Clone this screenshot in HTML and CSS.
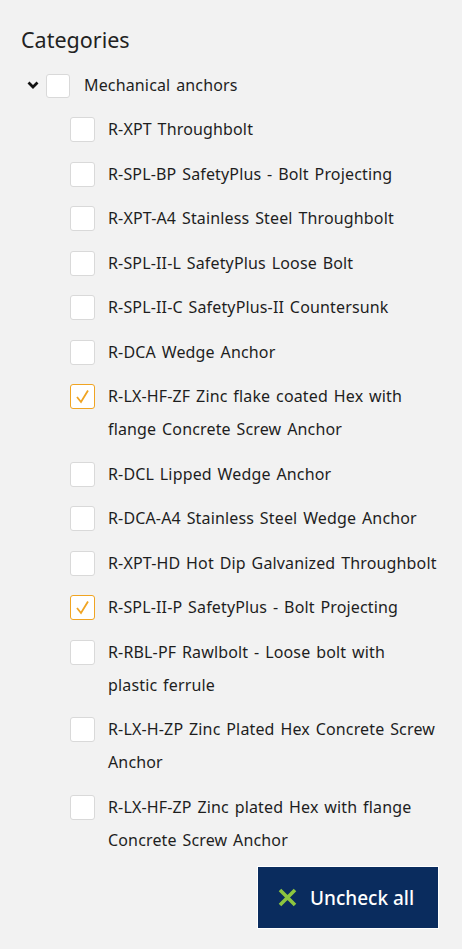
FILE: index.html
```html
<!DOCTYPE html>
<html lang="en">
<head>
<meta charset="utf-8">
<title>Categories</title>
<link rel="stylesheet" href="styles.css">
</head>
<body>
<div class="panel">
  <h2 class="title">Categories</h2>
  <div class="parent-row">
    <span class="chevron"><svg width="12" height="8" viewBox="0 0 12 8"><polyline points="1.5,1.5 6,6 10.5,1.5" fill="none" stroke="#111" stroke-width="2.8" stroke-linejoin="miter"/></svg></span>
    <span class="box parent-box"></span>
    <span class="label">Mechanical anchors</span>
  </div>
  <ul class="children">
    <li class="item"><span class="box"></span><span class="label">R-XPT Throughbolt</span></li>
    <li class="item"><span class="box"></span><span class="label">R-SPL-BP SafetyPlus - Bolt Projecting</span></li>
    <li class="item"><span class="box"></span><span class="label">R-XPT-A4 Stainless Steel Throughbolt</span></li>
    <li class="item"><span class="box"></span><span class="label">R-SPL-II-L SafetyPlus Loose Bolt</span></li>
    <li class="item"><span class="box"></span><span class="label">R-SPL-II-C SafetyPlus-II Countersunk</span></li>
    <li class="item"><span class="box"></span><span class="label">R-DCA Wedge Anchor</span></li>
    <li class="item"><span class="box checked"><svg width="17" height="17" viewBox="0 0 17 17"><polyline points="3,9 7,14 14,2.5" fill="none" stroke="#f0a422" stroke-width="1.8"/></svg></span><span class="label">R-LX-HF-ZF Zinc flake coated Hex with flange Concrete Screw Anchor</span></li>
    <li class="item"><span class="box"></span><span class="label">R-DCL Lipped Wedge Anchor</span></li>
    <li class="item"><span class="box"></span><span class="label">R-DCA-A4 Stainless Steel Wedge Anchor</span></li>
    <li class="item"><span class="box"></span><span class="label">R-XPT-HD Hot Dip Galvanized Throughbolt</span></li>
    <li class="item"><span class="box checked"><svg width="17" height="17" viewBox="0 0 17 17"><polyline points="3,9 7,14 14,2.5" fill="none" stroke="#f0a422" stroke-width="1.8"/></svg></span><span class="label">R-SPL-II-P SafetyPlus - Bolt Projecting</span></li>
    <li class="item"><span class="box"></span><span class="label">R-RBL-PF Rawlbolt - Loose bolt with plastic ferrule</span></li>
    <li class="item"><span class="box"></span><span class="label">R-LX-H-ZP Zinc Plated Hex Concrete Screw Anchor</span></li>
    <li class="item"><span class="box"></span><span class="label">R-LX-HF-ZP Zinc plated Hex with flange Concrete Screw Anchor</span></li>
  </ul>
  <div class="actions">
    <button class="uncheck" type="button"><svg width="21" height="21" viewBox="0 0 21 21"><path d="M3 3 L18 18 M18 3 L3 18" stroke="#8dc63f" stroke-width="3.6" stroke-linecap="butt"/></svg><span>Uncheck all</span></button>
  </div>
</div>
</body>
</html>
```
FILE: styles.css
```css
* { box-sizing: border-box; }
html, body {
  margin: 0;
  padding: 0;
  background: #f2f2f2;
}
body {
  font-family: "Noto Sans", "Open Sans", sans-serif;
  color: #1e1e1e;
  width: 462px;
  height: 949px;
  overflow: hidden;
}
.panel {
  padding: 25px 23px 0 21px;
}
.title {
  margin: 0 0 14px 0;
  font-weight: 400;
  font-size: 21.5px;
  line-height: 30px;
  color: #222;
}
.parent-row {
  display: flex;
  align-items: center;
  height: 33px;
  padding-left: 6px;
  margin-bottom: 11px;
}
.chevron {
  display: flex;
  width: 13px;
  margin-right: 6px;
  margin-top: -2px;
}
.box {
  flex: none;
  width: 25px;
  height: 25px;
  background: #fff;
  border: 1px solid #d9d9d9;
  border-radius: 3px;
  display: flex;
  align-items: center;
  justify-content: center;
}
.parent-box {
  width: 24px;
  height: 24px;
  margin-right: 14px;
}
.box.checked {
  border-color: #f0a422;
  border-width: 1.5px;
}
.label {
  font-size: 16px;
  line-height: 33px;
  letter-spacing: 0.15px;
  word-spacing: 1.5px;
}
.children {
  list-style: none;
  margin: 0;
  padding: 0 0 0 49px;
}
.item {
  display: flex;
  align-items: flex-start;
  gap: 13px;
  margin-bottom: 11.5px;
}
.item:last-child {
  margin-bottom: 0;
}
.item .box {
  margin-top: 4px;
}
.actions {
  display: flex;
  justify-content: flex-end;
  margin-top: 9.5px;
}
.uncheck {
  display: flex;
  align-items: center;
  gap: 12px;
  width: 182px;
  height: 63px;
  padding: 0 0 0 19px;
  background: #0a2c5e;
  border: 1px solid #fff;
  color: #fff;
  font-family: "Noto Sans", "Open Sans", sans-serif;
  font-size: 19px;
  font-weight: 500;
  cursor: pointer;
}
```
